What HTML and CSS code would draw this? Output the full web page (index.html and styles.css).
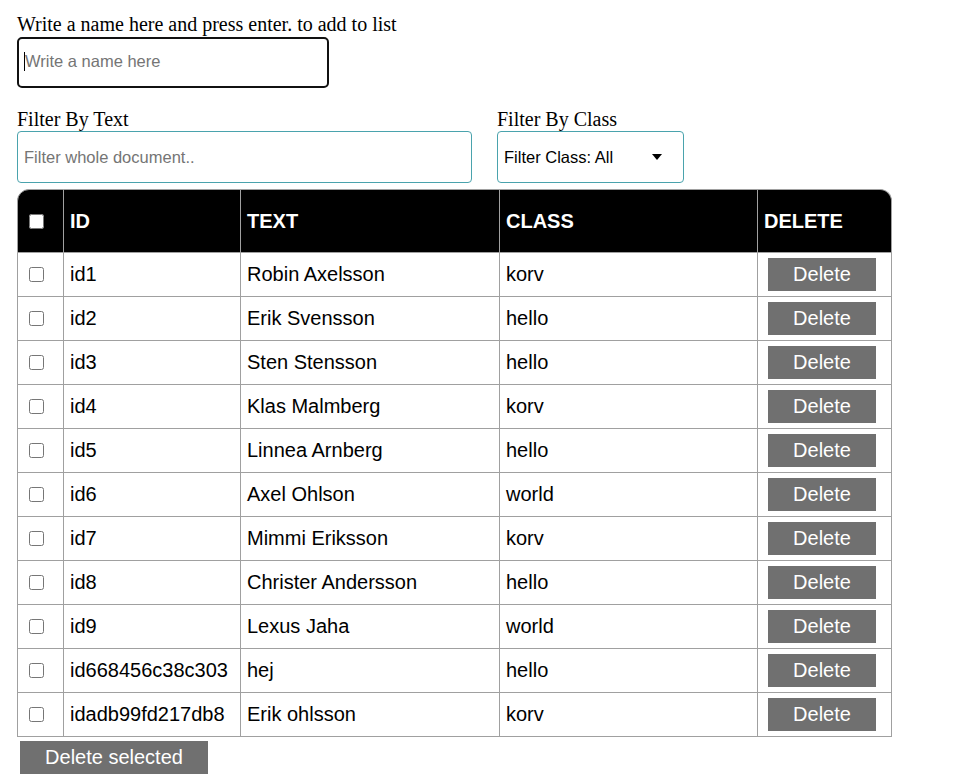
FILE: index.html
```html
<!DOCTYPE html>
<html lang="en">
<head>
<meta charset="utf-8">
<title>List</title>
<link rel="stylesheet" href="styles.css">
</head>
<body>
<div class="page">
  <div class="add">
    <label class="lbl" for="nm">Write a name here and press enter. to add to list</label>
    <div class="add-field"><span class="caret"></span><input id="nm" class="add-input" type="text" placeholder="Write a name here"></div>
  </div>

  <div class="filters">
    <div class="group">
      <label class="lbl" for="ft">Filter By Text</label>
      <input id="ft" class="filter-input" type="text" placeholder="Filter whole document..">
    </div>
    <div class="group">
      <span class="lbl">Filter By Class</span>
      <div class="select"><span>Filter Class: All</span><svg class="arrow" width="10" height="6" viewBox="0 0 10 6"><path d="M0 0H10L5 6Z" fill="#000"/></svg></div>
    </div>
  </div>

  <table class="list">
    <thead>
      <tr>
        <th class="c1"><input type="checkbox" class="cb"></th>
        <th class="c2">ID</th>
        <th class="c3">TEXT</th>
        <th class="c4">CLASS</th>
        <th class="c5">DELETE</th>
      </tr>
    </thead>
    <tbody>
      <tr><td class="c1"><input type="checkbox" class="cb"></td><td>id1</td><td>Robin Axelsson</td><td>korv</td><td class="del"><button class="btn">Delete</button></td></tr>
      <tr><td class="c1"><input type="checkbox" class="cb"></td><td>id2</td><td>Erik Svensson</td><td>hello</td><td class="del"><button class="btn">Delete</button></td></tr>
      <tr><td class="c1"><input type="checkbox" class="cb"></td><td>id3</td><td>Sten Stensson</td><td>hello</td><td class="del"><button class="btn">Delete</button></td></tr>
      <tr><td class="c1"><input type="checkbox" class="cb"></td><td>id4</td><td>Klas Malmberg</td><td>korv</td><td class="del"><button class="btn">Delete</button></td></tr>
      <tr><td class="c1"><input type="checkbox" class="cb"></td><td>id5</td><td>Linnea Arnberg</td><td>hello</td><td class="del"><button class="btn">Delete</button></td></tr>
      <tr><td class="c1"><input type="checkbox" class="cb"></td><td>id6</td><td>Axel Ohlson</td><td>world</td><td class="del"><button class="btn">Delete</button></td></tr>
      <tr><td class="c1"><input type="checkbox" class="cb"></td><td>id7</td><td>Mimmi Eriksson</td><td>korv</td><td class="del"><button class="btn">Delete</button></td></tr>
      <tr><td class="c1"><input type="checkbox" class="cb"></td><td>id8</td><td>Christer Andersson</td><td>hello</td><td class="del"><button class="btn">Delete</button></td></tr>
      <tr><td class="c1"><input type="checkbox" class="cb"></td><td>id9</td><td>Lexus Jaha</td><td>world</td><td class="del"><button class="btn">Delete</button></td></tr>
      <tr><td class="c1"><input type="checkbox" class="cb"></td><td>id668456c38c303</td><td>hej</td><td>hello</td><td class="del"><button class="btn">Delete</button></td></tr>
      <tr><td class="c1"><input type="checkbox" class="cb"></td><td>idadb99fd217db8</td><td>Erik ohlsson</td><td>korv</td><td class="del"><button class="btn">Delete</button></td></tr>
    </tbody>
  </table>

  <button class="btn btn-selected">Delete selected</button>
</div>
</body>
</html>
```

FILE: styles.css
```css
* { box-sizing: border-box; }

html, body {
  margin: 0;
  padding: 0;
  background: #fff;
}

.page {
  padding: 13px 0 0 17px;
  font-family: "Liberation Serif", "Times New Roman", serif;
  font-size: 20px;
  color: #000;
}

.lbl {
  display: block;
  line-height: 23px;
  height: 23px;
  font-family: "Liberation Serif", "Times New Roman", serif;
  font-size: 20px;
}

.add-field {
  display: flex;
  align-items: center;
  width: 312px;
  height: 51px;
  margin-top: 1px;
  border: 2px solid #111;
  border-radius: 5px;
  padding-left: 5px;
}

.caret {
  width: 1px;
  height: 19px;
  margin-top: -2px;
  background: #000;
  flex: none;
}

.add-input {
  flex: 1;
  min-width: 0;
  height: 100%;
  border: 0;
  outline: none;
  padding: 0 0 2px 0;
  font-family: "Liberation Sans", Arial, sans-serif;
  font-size: 16.5px;
  background: transparent;
}

.add-input::placeholder,
.filter-input::placeholder {
  color: #757575;
  opacity: 1;
}

.filters {
  display: flex;
  gap: 25px;
  margin-top: 20px;
}

.filter-input {
  display: block;
  width: 455px;
  height: 52px;
  border: 1px solid #4aa3ad;
  border-radius: 4px;
  padding: 0 0 0 6px;
  font-family: "Liberation Sans", Arial, sans-serif;
  font-size: 16.5px;
  outline: none;
}

.select {
  display: flex;
  align-items: center;
  justify-content: space-between;
  width: 187px;
  height: 52px;
  border: 1px solid #4aa3ad;
  border-radius: 4px;
  padding: 0 21px 0 6px;
  font-family: "Liberation Sans", Arial, sans-serif;
  font-size: 16.5px;
  color: #000;
}

.arrow { display: block; flex: none; }

.list {
  margin-top: 6px;
  border-collapse: separate;
  border-spacing: 0;
  table-layout: fixed;
  width: 875px;
  font-family: "Liberation Sans", Arial, sans-serif;
  font-size: 20px;
}

.list th,
.list td {
  border-right: 1px solid #a0a0a0;
  border-bottom: 1px solid #a0a0a0;
  padding: 0 6px;
  text-align: left;
  vertical-align: middle;
  white-space: nowrap;
}

.list .c1 {
  border-left: 1px solid #a0a0a0;
  padding: 0 0 0 11px;
}

.list th {
  background: #000;
  color: #fff;
  font-weight: bold;
  border-top: 1px solid #a0a0a0;
}

.list th.c1 { width: 47px; border-top-left-radius: 12px; }
.list th.c2 { width: 177px; }
.list th.c3 { width: 259px; }
.list th.c4 { width: 258px; }
.list th.c5 { width: 134px; border-top-right-radius: 12px; }

.list thead tr { height: 64px; }
.list tbody tr { height: 44px; }

.cb {
  display: block;
  width: 15px;
  height: 15px;
  margin: 0;
}

.list td.del { padding-left: 10px; }

.btn {
  display: block;
  width: 108px;
  height: 33px;
  margin: 0;
  border: 0;
  padding: 0;
  background: #707070;
  color: #fff;
  font-family: "Liberation Sans", Arial, sans-serif;
  font-size: 20px;
  text-align: center;
  line-height: 33px;
}

.btn-selected {
  width: 188px;
  margin: 4px 0 0 3px;
}
```
